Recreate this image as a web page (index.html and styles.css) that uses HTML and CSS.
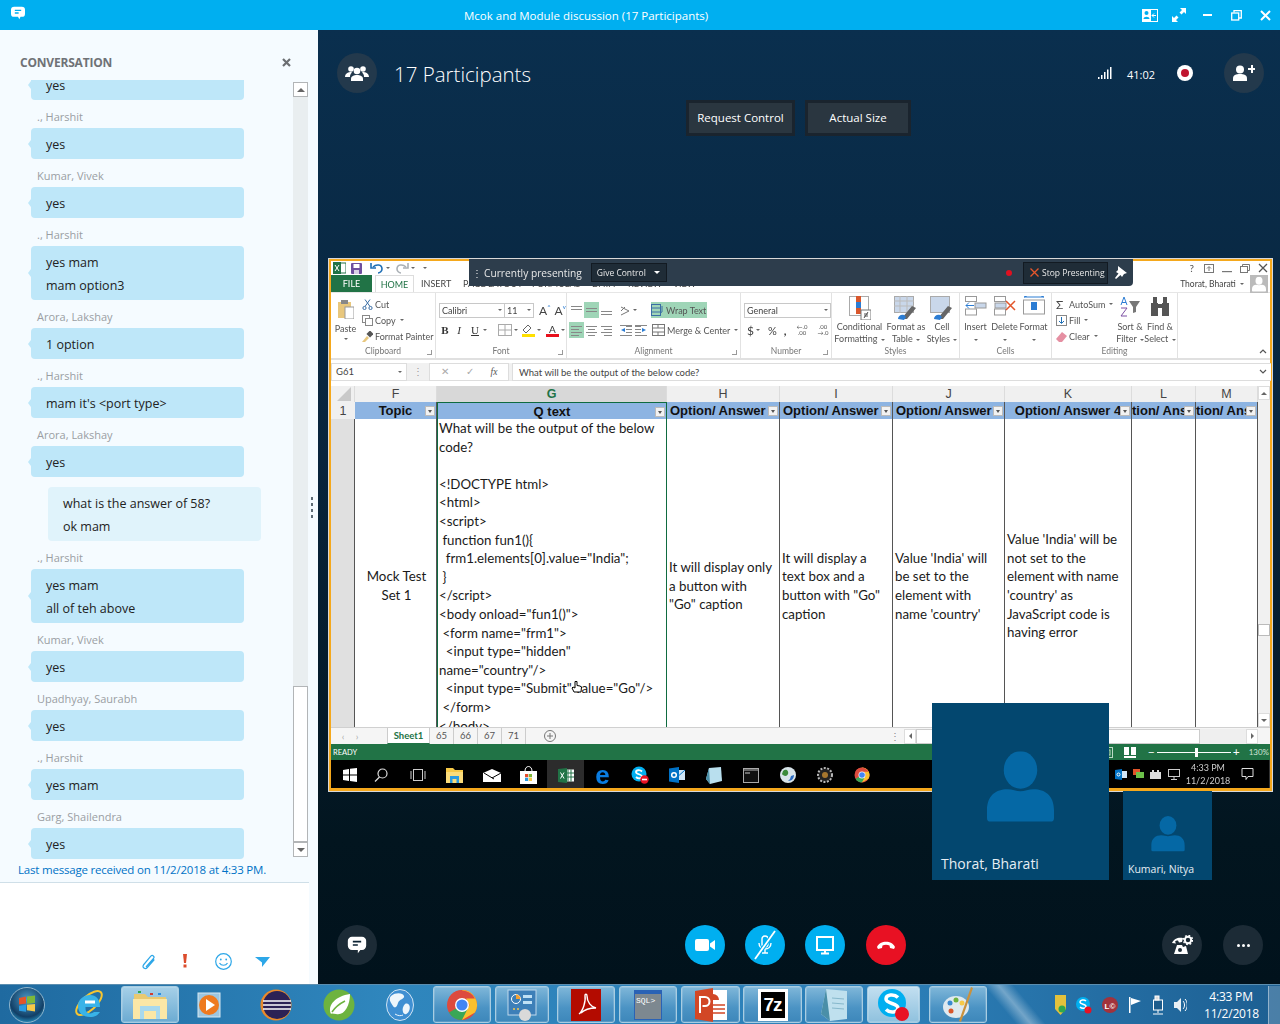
FILE: index.html
```html
<!DOCTYPE html>
<html lang="en">
<head>
<meta charset="utf-8">
<title>Mcok and Module discussion (17 Participants)</title>
<link rel="stylesheet" href="styles.css">
</head>
<body>
<svg class="defs" aria-hidden="true">
  <symbol id="chrome" viewBox="0 0 32 32">
    <circle cx="16" cy="16" r="15" fill="#dd4b3e"/>
    <path d="M16 16 3 23.500A15 15 0 0 0 16 31l7.500-13z" fill="#3aa757"/>
    <path d="M16 1a15 15 0 0 1 13 22.500L16 31l7.500-15z" fill="#fbc02d"/>
    <path d="M3 8.500 9.500 20 16 9.500h13A15 15 0 0 0 3 8.500z" fill="#dd4b3e"/>
    <circle cx="16" cy="16" r="7" fill="#fff"/><circle cx="16" cy="16" r="5.600" fill="#4285f4"/>
  </symbol>
  <symbol id="person" viewBox="0 0 100 110">
    <ellipse cx="50" cy="28" rx="25" ry="28"/>
    <path d="M0 100V88C0 66 14 57 30 57c8 0 14 3 20 3s12-3 20-3c16 0 30 9 30 31v12q0 5-5 5H5q-5 0-5-5z"/>
  </symbol>
  <symbol id="chatglyph" viewBox="0 0 24 24">
    <path d="M6 2h12a5 5 0 0 1 5 5v6a5 5 0 0 1-5 5h-2l-3 4v-4H6a5 5 0 0 1-5-5V7a5 5 0 0 1 5-5z" fill="#fff"/>
    <path d="M7 8h10M7 12h6" stroke="#0b2233" stroke-width="2"/>
  </symbol>
</svg>

<header class="titlebar">
  <svg class="title-chat" width="16" height="14" viewBox="0 0 24 22"><path d="M6 1h12a5 5 0 0 1 5 5v6a5 5 0 0 1-5 5h-2l-2 4-2-4H6a5 5 0 0 1-5-5V6a5 5 0 0 1 5-5z" fill="#fff"/><path d="M7 7h10M7 11h6" stroke="#00aff0" stroke-width="2"/></svg>
  <span class="title-text">Mcok and Module discussion (17 Participants)</span>
  <div class="win-btns">
    <span class="win-btn"><svg width="16" height="13" viewBox="0 0 16 13"><rect width="16" height="13" fill="#fff"/><rect x="9" y="1" width="6" height="11" fill="#00aff0"/><circle cx="4.500" cy="4" r="2" fill="#00aff0"/><path d="M1.500 10c0-3 6-3 6 0z" fill="#00aff0"/><path d="M14 6.500h-4M12 4.500l-2 2 2 2" stroke="#fff" fill="none"/></svg></span>
    <span class="win-btn"><svg width="14" height="14" viewBox="0 0 14 14" fill="#fff"><path d="M8 0h6v6l-2-2-2.500 2.500-2-2L10 2zM6 14H0V8l2 2 2.500-2.500 2 2L4 12z"/></svg></span>
    <span class="win-btn"><svg width="9" height="2" viewBox="0 0 9 2"><rect width="9" height="2" fill="#fff"/></svg></span>
    <span class="win-btn"><svg width="11" height="11" viewBox="0 0 11 11" fill="none" stroke="#fff" stroke-width="1.300"><rect x=".7" y="3" width="7" height="7"/><path d="M3 2.500V.7h7.300V8H8"/></svg></span>
    <span class="win-btn"><svg width="11" height="11" viewBox="0 0 11 11" stroke="#fff" stroke-width="2"><path d="M1 1l9 9M10 1l-9 9"/></svg></span>
  </div>
</header>

<main class="app">
  <aside class="sidebar">
    <div class="conv-head">
      <h2 class="conv-title">CONVERSATION</h2>
      <svg class="conv-close" width="9" height="9" viewBox="0 0 9 9" stroke="#6b6e72" stroke-width="2.200"><path d="M1 1l7 7M8 1l-7 7"/></svg>
    </div>
    <div class="conv-body">
      <div class="messages">
        <div class="msg-scroll">
          <div class="bubble">yes</div>
          <div class="sender">., Harshit</div>
          <div class="bubble">yes</div>
          <div class="sender">Kumar, Vivek</div>
          <div class="bubble">yes</div>
          <div class="sender">., Harshit</div>
          <div class="bubble">yes mam<br>mam option3</div>
          <div class="sender">Arora, Lakshay</div>
          <div class="bubble">1 option</div>
          <div class="sender">., Harshit</div>
          <div class="bubble">mam it's &lt;port type&gt;</div>
          <div class="sender">Arora, Lakshay</div>
          <div class="bubble">yes</div>
          <div class="bubble self">what is the answer of 58?<br>ok mam</div>
          <div class="sender">., Harshit</div>
          <div class="bubble">yes mam<br>all of teh above</div>
          <div class="sender">Kumar, Vivek</div>
          <div class="bubble">yes</div>
          <div class="sender">Upadhyay, Saurabh</div>
          <div class="bubble">yes</div>
          <div class="sender">., Harshit</div>
          <div class="bubble">yes mam</div>
          <div class="sender">Garg, Shailendra</div>
          <div class="bubble">yes</div>
        </div>
      </div>
      <div class="grip"><i></i><i></i><i></i><i></i></div>
      <div class="chat-scroll">
        <div class="cs-btn"><span class="tri-up"></span></div>
        <div class="cs-track"><div class="cs-thumb"></div></div>
        <div class="cs-btn"><span class="tri-down"></span></div>
      </div>
    </div>
    <p class="last-msg">Last message received on 11/2/2018 at 4:33 PM.</p>
    <div class="composer">
      <div class="composer-tools">
        <svg width="16" height="18" viewBox="0 0 16 18" fill="none" stroke="#2da7e8" stroke-width="1.200"><path d="M5 15 12.500 6.500c1.500-2 -1-4-2.700-2.300L2.800 12.500c-2.500 3 1.500 5.500 3.500 3.200l7-8.200"/></svg>
        <svg width="6" height="14" viewBox="0 0 6 14" fill="#dc4c2c"><path d="M1 0h4L4 9H2z"/><rect x="1.500" y="10.500" width="3" height="3"/></svg>
        <svg width="17" height="17" viewBox="0 0 17 17" fill="none" stroke="#2da7e8" stroke-width="1.200"><circle cx="8.500" cy="8.500" r="7.800"/><circle cx="5.800" cy="6.500" r=".9" fill="#2da7e8" stroke="none"/><circle cx="11.200" cy="6.500" r=".9" fill="#2da7e8" stroke="none"/><path d="M4.500 10c1.800 3 6.200 3 8 0"/></svg>
        <svg width="15" height="11" viewBox="0 0 15 11" fill="#2da7e8"><path d="M0 1h15L7 11V6.500z"/></svg>
      </div>
    </div>
  </aside>

  <section class="stage">
    <div class="stage-head">
      <span class="round dark"><svg width="24" height="16" viewBox="0 0 24 16" fill="#fff"><circle cx="6" cy="4" r="2.800"/><circle cx="18" cy="4" r="2.800"/><circle cx="12" cy="6" r="3.300"/><path d="M0 12c0-4 4-5 6-5l1 .5C5 9 5 11 5 12zM24 12c0-4-4-5-6-5l-1 .5c2 1.500 2 3.500 2 4.500z"/><path d="M6 16v-2c0-3 3-4 6-4s6 1 6 4v2z"/></svg></span>
      <h1 class="participants">17 Participants</h1>
      <div class="head-right">
        <svg class="signal" width="14" height="12" viewBox="0 0 14 12" fill="#fff"><rect y="10" width="1.500" height="2"/><rect x="3" y="8" width="1.500" height="4"/><rect x="6" y="5" width="1.500" height="7"/><rect x="9" y="2.500" width="1.500" height="9.500"/><rect x="12" width="1.500" height="12"/></svg>
        <span class="timer">41:02</span>
        <svg class="rec" width="16" height="16" viewBox="0 0 16 16"><circle cx="8" cy="8" r="8" fill="#fff"/><circle cx="8" cy="8" r="4" fill="#c0152f"/></svg>
        <span class="round dark"><svg width="22" height="16" viewBox="0 0 22 16" fill="#fff"><circle cx="7" cy="4.500" r="4"/><path d="M0 16v-2.500C0 10 3 9 7 9s7 1 7 4.500V16z"/><path d="M15 3h3V0h2v3h2v2h-2v3h-2V5h-3z"/></svg></span>
      </div>
    </div>
    <div class="view-btns">
      <button class="view-btn req">Request Control</button>
      <button class="view-btn act">Actual Size</button>
    </div>

    <div class="screen">
      <div class="xl">
        <div class="xl-title">
          <svg class="q" width="13" height="12" viewBox="0 0 13 12"><rect x="4" y="1" width="9" height="10" fill="#fff" stroke="#217346"/><rect y="0" width="8" height="12" fill="#217346"/><path d="M2 3l4 6M6 3L2 9" stroke="#fff"/></svg>
          <svg class="q" width="11" height="11" viewBox="0 0 11 11"><rect width="11" height="11" rx="1" fill="#6e4f9e"/><rect x="2.500" y="1" width="6" height="4" fill="#fff"/><rect x="3" y="7" width="5" height="4" fill="#d9d2e6"/></svg>
          <svg class="q undo" width="14" height="12" viewBox="0 0 14 12" fill="none" stroke="#1f6fb5" stroke-width="1.600"><path d="M3 5c3-3 9-3 9 2 0 2-2 4-4 4"/><path d="M1 1v5h5"/></svg>
          <span class="caret-sm"></span>
          <svg class="q redo" width="14" height="12" viewBox="0 0 14 12" fill="none" stroke="#aab0b5" stroke-width="1.600"><path d="M11 5C8 2 2 2 2 7c0 2 2 4 4 4"/><path d="M13 1v5H8"/></svg>
          <span class="caret-sm"></span>
          <span class="caret-sm last"></span>
          <div class="xl-winbtns">
            <span class="xw">?</span>
            <svg width="10" height="9" viewBox="0 0 10 9" fill="none" stroke="#777"><rect x=".5" y=".5" width="9" height="8"/><path d="M5 7V3M3 4.500 5 2.500l2 2"/></svg>
            <svg width="10" height="9" viewBox="0 0 10 9"><rect y="7" width="10" height="1.200" fill="#777"/></svg>
            <svg width="10" height="9" viewBox="0 0 10 9" fill="none" stroke="#777"><rect x=".5" y="2.500" width="7" height="6"/><path d="M2.500 2.500v-2h7v6h-2"/></svg>
            <svg width="10" height="10" viewBox="0 0 10 10" stroke="#555" stroke-width="1.300"><path d="M1 1l8 8M9 1L1 9"/></svg>
          </div>
        </div>
        <div class="xl-tabs">
          <span class="tab file">FILE</span>
          <span class="tab home">HOME</span>
          <span class="tab ins">INSERT</span>
          <span class="tab pl">PAGE LAYOUT</span>
          <span class="tab fm">FORMULAS</span>
          <span class="tab dt">DATA</span>
          <span class="tab rv">REVIEW</span>
          <span class="tab vw">VIEW</span>
          <span class="xl-user">Thorat, Bharati <span class="caret-sm"></span></span>
          <span class="xl-avatar"><svg width="14" height="17" viewBox="0 0 100 110" fill="#fff"><use href="#person"/></svg></span>
        </div>

        <div class="ribbon">
          <div class="rg clip">
            <div class="rg-body">
              <div class="paste">
                <svg width="17" height="20" viewBox="0 0 17 20"><rect x="1" y="3" width="13" height="16" fill="#e8c77d"/><rect x="4" y="1" width="7" height="4" fill="#888"/><rect x="8" y="8" width="9" height="12" fill="#fff" stroke="#999"/></svg>
                <span>Paste</span><span class="caret-sm"></span>
              </div>
              <div class="clip-col">
                <span class="ci"><svg width="11" height="11" viewBox="0 0 11 11" fill="none" stroke="#3a6ea5"><circle cx="2.500" cy="9" r="1.600"/><circle cx="8.500" cy="9" r="1.600"/><path d="M3 7.500 8 .5M8 7.500 3 .5"/></svg>Cut</span>
                <span class="ci"><svg width="11" height="11" viewBox="0 0 11 11" fill="#fff" stroke="#888"><rect x=".5" y=".5" width="7" height="7"/><rect x="3.500" y="3.500" width="7" height="7"/></svg>Copy <span class="caret-sm"></span></span>
                <span class="ci"><svg width="11" height="11" viewBox="0 0 11 11"><path d="M0 11 5 5l2 2-4 4z" fill="#e8c77d"/><rect x="5.500" y=".5" width="5" height="5" transform="rotate(45 8 3)" fill="#555"/></svg>Format Painter</span>
              </div>
            </div>
            <div class="rg-label">Clipboard<i class="launch"></i></div>
          </div>

          <div class="rg font">
            <div class="rg-body col">
              <div class="r1">
                <span class="sel s-font">Calibri<span class="caret-sm"></span></span><span class="sel s-size">11<span class="caret-sm"></span></span>
                <span class="aa big">A<sup>^</sup></span><span class="aa">A<sup>v</sup></span>
              </div>
              <div class="r2">
                <b class="ft">B</b><i class="ft">I</i><u class="ft">U</u><span class="caret-sm"></span>
                <svg class="sp" width="14" height="12" viewBox="0 0 14 12" fill="none" stroke="#aaa"><rect x=".5" y=".5" width="13" height="11"/><path d="M7 0v12M0 6h14"/></svg><span class="caret-sm"></span>
                <span class="colored"><svg width="13" height="10" viewBox="0 0 13 10" fill="#fff" stroke="#666"><path d="M6 1 1 6l3 3 5-5z"/></svg><i class="bar yellow"></i></span><span class="caret-sm"></span>
                <span class="colored"><span class="fa">A</span><i class="bar red"></i></span><span class="caret-sm"></span>
              </div>
            </div>
            <div class="rg-label">Font<i class="launch"></i></div>
          </div>

          <div class="rg align">
            <div class="rg-body col">
              <div class="r1">
                <span class="al"><svg width="13" height="9" viewBox="0 0 13 9" stroke="#888"><path d="M1 .5h11M1 3.500h11"/></svg></span>
                <span class="al on"><svg width="13" height="9" viewBox="0 0 13 9" stroke="#888"><path d="M1 2.500h11M1 5.500h11"/></svg></span>
                <span class="al"><svg width="13" height="9" viewBox="0 0 13 9" stroke="#888"><path d="M1 5.500h11M1 8.500h11"/></svg></span>
                <svg class="orient" width="11" height="11" viewBox="0 0 11 11" fill="none" stroke="#777"><path d="M1 2l8 4-8 4M1 6l4-4"/></svg><span class="caret-sm"></span>
                <span class="wrap"><svg width="14" height="12" viewBox="0 0 14 12" fill="none" stroke="#3a6ea5"><rect x=".5" y=".5" width="9" height="11"/><path d="M0 4h9M0 8h9M11 2v6l-2 1"/></svg>Wrap Text</span>
              </div>
              <div class="r2">
                <span class="al on"><svg width="13" height="11" viewBox="0 0 13 11" stroke="#888"><path d="M1 1.500h11M1 4.500h8M1 7.500h11M1 10.500h8"/></svg></span>
                <span class="al"><svg width="13" height="11" viewBox="0 0 13 11" stroke="#888"><path d="M1 1.500h11M3 4.500h7M1 7.500h11M3 10.500h7"/></svg></span>
                <span class="al"><svg width="13" height="11" viewBox="0 0 13 11" stroke="#888"><path d="M1 1.500h11M4 4.500h8M1 7.500h11M4 10.500h8"/></svg></span>
                <svg class="orient" width="12" height="11" viewBox="0 0 12 11" stroke="#888" fill="#2b7cd3"><path d="M6 1.500h6M6 4.500h6M6 7.500h6M0 10.500h12M0 .5h12" fill="none"/><path d="M5 3v4L1 5z" stroke="none"/></svg>
                <svg class="indent" width="12" height="11" viewBox="0 0 12 11" stroke="#888" fill="#2b7cd3"><path d="M0 1.500h6M0 4.500h6M0 7.500h6M0 10.500h12M0 .5h12" fill="none"/><path d="M7 3v4l4-2z" stroke="none"/></svg>
                <span class="merge"><svg width="13" height="12" viewBox="0 0 13 12" fill="none" stroke="#777"><rect x=".5" y=".5" width="12" height="11"/><path d="M0 4h13M0 8h13M6 0v4M6 8v4"/></svg>Merge &amp; Center <span class="caret-sm"></span></span>
              </div>
            </div>
            <div class="rg-label">Alignment<i class="launch"></i></div>
          </div>

          <div class="rg number">
            <div class="rg-body col">
              <div class="r1"><span class="sel s-num">General<span class="caret-sm"></span></span></div>
              <div class="r2 num-row"><span class="nb">$</span><span class="caret-sm"></span><span class="nb pc">%</span><span class="nb comma">,</span><span class="dec">←.0<br>.00</span><span class="dec">.00<br>→.0</span></div>
            </div>
            <div class="rg-label">Number<i class="launch"></i></div>
          </div>

          <div class="rg styles">
            <div class="rg-body">
              <div class="big-tool t-cf"><svg width="22" height="24" viewBox="0 0 22 24"><rect x=".5" y=".5" width="19" height="19" fill="#fff" stroke="#aaa"/><rect x="7" y="0" width="5" height="6" fill="#d9572c"/><rect x="7" y="6" width="5" height="6" fill="#2b7cd3"/><rect x="7" y="12" width="5" height="6" fill="#d9572c"/><rect x="12" y="14" width="10" height="10" fill="#fff" stroke="#777"/><path d="M15 18h4M15 20h4M19 16l-4 6" stroke="#555"/></svg><span>Conditional<br>Formatting <i class="caret-sm"></i></span></div>
              <div class="big-tool t-ft"><svg width="24" height="24" viewBox="0 0 24 24"><rect x=".5" y=".5" width="19" height="16" fill="#c9d7ea" stroke="#aaa"/><path d="M0 5h20M0 10h20M6 0v17M13 0v17" stroke="#bbb"/><path d="M8 22 18 10l4 2-9 11H5z" fill="#666"/><path d="M4 23c0-3 3-5 6-4l2 2-2 3z" fill="#2b7cd3"/></svg><span>Format as<br>Table <i class="caret-sm"></i></span></div>
              <div class="big-tool t-cs"><svg width="24" height="24" viewBox="0 0 24 24"><rect x=".5" y=".5" width="19" height="16" fill="#c9d7ea" stroke="#aaa"/><path d="M8 22 18 10l4 2-9 11H5z" fill="#666"/><path d="M4 23c0-3 3-5 6-4l2 2-2 3z" fill="#2b7cd3"/></svg><span>Cell<br>Styles <i class="caret-sm"></i></span></div>
            </div>
            <div class="rg-label">Styles</div>
          </div>

          <div class="rg cells">
            <div class="rg-body">
              <div class="big-tool t-c"><svg width="22" height="20" viewBox="0 0 22 20" fill="none" stroke="#999"><rect x=".5" y=".5" width="11" height="5"/><rect x=".5" y="13" width="11" height="6"/><rect x="10" y="7" width="11" height="5" fill="#c9d7ea"/><path d="M9 9.500H1M4 6.500l-3 3 3 3" stroke="#2b7cd3"/></svg><span>Insert<br><i class="caret-sm"></i></span></div>
              <div class="big-tool t-c"><svg width="22" height="20" viewBox="0 0 22 20" fill="none" stroke="#999"><rect x=".5" y=".5" width="11" height="5"/><rect x=".5" y="13" width="11" height="6"/><rect x="1" y="7" width="11" height="5" fill="#c9d7ea"/><path d="M12 5l9 9M21 5l-9 9" stroke="#e2552a" stroke-width="1.500"/></svg><span>Delete<br><i class="caret-sm"></i></span></div>
              <div class="big-tool t-c"><svg width="22" height="20" viewBox="0 0 22 20" fill="none" stroke="#999"><path d="M1 1h20M1 1l3-1M21 1l-3-1" stroke="#2b7cd3"/><rect x=".5" y="4" width="21" height="14"/><rect x="8" y="6" width="6" height="8" fill="#2b7cd3" stroke="none"/></svg><span>Format<br><i class="caret-sm"></i></span></div>
            </div>
            <div class="rg-label">Cells</div>
          </div>

          <div class="rg editing">
            <div class="rg-body">
              <div class="edit-col">
                <span class="ci"><span class="sigma">&#931;</span>AutoSum <span class="caret-sm"></span></span>
                <span class="ci"><svg width="11" height="11" viewBox="0 0 11 11" fill="#fff" stroke="#888"><rect x=".5" y=".5" width="10" height="10"/><path d="M5.500 2v6M3 6l2.500 2.500L8 6" stroke="#1f6fb5" fill="none"/></svg>Fill <span class="caret-sm"></span></span>
                <span class="ci"><svg width="11" height="11" viewBox="0 0 11 11"><path d="M0 8 6 1l5 4-5 6H3z" fill="#e58fa2"/></svg>Clear <span class="caret-sm"></span></span>
              </div>
              <div class="big-tool t-sf"><svg width="22" height="21" viewBox="0 0 22 21"><path d="M2 9 5 1l3 8M3 6.500h4" stroke="#2b7cd3" fill="none"/><path d="M2 12h6l-6 8h6" stroke="#7b4fa3" fill="none"/><path d="M10 5h11l-4 6v5l-3 1v-6z" fill="#777"/></svg><span>Sort &amp;<br>Filter <i class="caret-sm"></i></span></div>
              <div class="big-tool t-sf"><svg width="22" height="21" viewBox="0 0 22 21" fill="#555"><rect x="2" y="7" width="7" height="13"/><rect x="13" y="7" width="7" height="13"/><rect x="4" y="1" width="4" height="7"/><rect x="14" y="1" width="4" height="7"/><rect x="9" y="8" width="4" height="4"/></svg><span>Find &amp;<br>Select <i class="caret-sm"></i></span></div>
            </div>
            <div class="rg-label">Editing</div>
          </div>
          <div class="rg-end"><svg width="8" height="5" viewBox="0 0 8 5" fill="none" stroke="#555" stroke-width="1.200"><path d="M1 4l3-3 3 3"/></svg></div>
        </div>

        <div class="formula">
          <span class="namebox">G61<span class="caret-sm"></span></span>
          <span class="f-dots">&#8942;</span>
          <span class="f-btns"><span>&#10005;</span><span>&#10003;</span><em>fx</em></span>
          <span class="f-input">What will be the output of the below code?</span>
          <svg class="f-exp" width="8" height="5" viewBox="0 0 8 5" fill="none" stroke="#555" stroke-width="1.200"><path d="M1 1l3 3 3-3"/></svg>
        </div>

        <div class="sheet">
          <div class="grid-wrap">
            <div class="grid">
              <div class="ch corner"><svg width="14" height="14" viewBox="0 0 14 14"><path d="M14 0v14H0z" fill="#c9c9c9"/></svg></div>
              <div class="ch">F</div><div class="ch sel-col">G</div><div class="ch">H</div><div class="ch">I</div><div class="ch">J</div><div class="ch">K</div><div class="ch">L</div><div class="ch">M</div>

              <div class="rh">1</div>
              <div class="hd">Topic<i class="fb"></i></div>
              <div class="hd g-hd">Q text<i class="fb"></i></div>
              <div class="hd left">Option/ Answer<i class="fb"></i></div>
              <div class="hd left">Option/ Answer<i class="fb"></i></div>
              <div class="hd left">Option/ Answer<i class="fb"></i></div>
              <div class="hd clipr">Option/ Answer 4<i class="fb"></i></div>
              <div class="hd cut"><span>tion/ Ans</span><i class="fb"></i></div>
              <div class="hd cut"><span>tion/ Ans</span><i class="fb"></i></div>

              <div class="rh2"></div>
              <div class="dc ctr">Mock Test<br>Set 1</div>
              <div class="dc code">What will be the output of the below
code?

&lt;!DOCTYPE html&gt;
&lt;html&gt;
&lt;script&gt;
 function fun1(){
  frm1.elements[0].value="India";
 }
&lt;/script&gt;
&lt;body onload="fun1()"&gt;
 &lt;form name="frm1"&gt;
  &lt;input type="hidden"
name="country"/&gt;
  &lt;input type="Submit" value="Go"/&gt;
 &lt;/form&gt;
&lt;/body&gt;</div>
              <div class="dc">It will display only<br>a button with<br>"Go" caption</div>
              <div class="dc">It will display a<br>text box and a<br>button with "Go"<br>caption</div>
              <div class="dc">Value 'India' will<br>be set to the<br>element with<br>name 'country'</div>
              <div class="dc">Value 'India' will be<br>not set to the<br>element with name<br>'country' as<br>JavaScript code is<br>having error</div>
              <div class="dc"></div>
              <div class="dc"></div>
            </div>
            <svg class="cursor" width="11" height="12" viewBox="0 0 11 12" fill="#fff" stroke="#000"><path d="M4 .5h2v4l3 .5 1.500 1-.5 5H3L1 7l1-1 2 1z"/></svg>
          </div>
          <div class="v-scroll">
            <span class="vb"><span class="tri-up small"></span></span>
            <div class="v-track"><div class="v-thumb"></div></div>
            <span class="vb"><span class="tri-down small"></span></span>
          </div>
        </div>

        <div class="sheet-tabs">
          <span class="st-nav">&#8249;</span><span class="st-nav">&#8250;</span>
          <span class="st active">Sheet1</span>
          <span class="st">65</span><span class="st">66</span><span class="st">67</span><span class="st">71</span>
          <svg class="st-add" width="12" height="12" viewBox="0 0 12 12" fill="none" stroke="#777"><circle cx="6" cy="6" r="5.500"/><path d="M6 3v6M3 6h6"/></svg>
          <span class="st-dots">&#8942;</span>
          <div class="h-scroll">
            <span class="hb"><span class="tri-left"></span></span>
            <div class="h-track"><div class="h-thumb"></div></div>
            <span class="hb"><span class="tri-right"></span></span>
          </div>
        </div>

        <div class="status">
          <span>READY</span>
          <div class="status-right">
            <svg width="12" height="11" viewBox="0 0 12 11" fill="none" stroke="#bcd9c6"><rect x=".5" y=".5" width="11" height="10"/><rect x="3" y="3" width="6" height="5"/></svg>
            <svg class="st-v2" width="12" height="11" viewBox="0 0 12 11" fill="#fff"><path d="M0 0h5v8H0zM7 0h5v8H7zM0 9h12v2H0z"/></svg>
            <span class="zoom-minus">&#8722;</span>
            <span class="zoom-slider"><i></i></span>
            <span class="zoom-plus">+</span>
            <span class="zoom-val">130%</span>
          </div>
        </div>

        <div class="w10">
          <span class="w10i first"><svg width="14" height="14" viewBox="0 0 14 14" fill="#fff"><path d="M0 2l6-1v5.500H0zM7 .8 14 0v6.500H7zM0 7.500h6V13l-6-1zM7 7.500h7V14l-7-1z"/></svg></span>
          <span class="w10i"><svg width="14" height="14" viewBox="0 0 14 14" fill="none" stroke="#ddd" stroke-width="1.200"><circle cx="8.500" cy="5.500" r="4.500"/><path d="M5.500 9 1 13.500"/></svg></span>
          <span class="w10i"><svg width="16" height="12" viewBox="0 0 16 12" fill="none" stroke="#ccc"><rect x="3.500" y=".5" width="9" height="11"/><path d="M1 2v8M15 2v8"/></svg></span>
          <span class="w10i"><svg width="17" height="15" viewBox="0 0 17 15"><path d="M0 0h7l2 2h8v4H0z" fill="#f7c948"/><rect y="4" width="17" height="11" fill="#fbdc7a"/><rect x="4" y="8" width="9" height="7" fill="#2b9be0"/><rect x="6.500" y="11" width="4" height="4" fill="#fbdc7a"/></svg></span>
          <span class="w10i"><svg width="18" height="13" viewBox="0 0 18 13"><path d="M0 4 9 0l9 4v9H0z" fill="#fff"/><path d="M1 4l10 6" stroke="#000"/><path d="M18 4 9 9" stroke="#000"/></svg></span>
          <span class="w10i"><svg width="17" height="18" viewBox="0 0 17 18"><path d="M5 5c0-6 7-6 7 0" fill="none" stroke="#fff"/><rect y="5" width="17" height="13" fill="#fff"/><rect x="5" y="8" width="3.200" height="3.200" fill="#e74c2a"/><rect x="8.800" y="8" width="3.200" height="3.200" fill="#7db83a"/><rect x="5" y="11.800" width="3.200" height="3.200" fill="#2b9be0"/><rect x="8.800" y="11.800" width="3.200" height="3.200" fill="#f7c948"/></svg></span>
          <span class="w10i active"><svg width="16" height="15" viewBox="0 0 16 15"><rect x="5" y="1.500" width="11" height="12" fill="#fff"/><path d="M10 1.500v12M13 1.500v12M5 5h11M5 9h11" stroke="#217346"/><path d="M0 1l9-1v15l-9-1z" fill="#217346"/><path d="M2.500 4.500l3.500 6M6 4.500l-3.500 6" stroke="#fff"/></svg></span>
          <span class="w10i"><span class="edge">e</span></span>
          <span class="w10i"><svg width="18" height="18" viewBox="0 0 18 18"><circle cx="8" cy="8" r="7.500" fill="#00aff0"/><path d="M11 5.500C9 3.500 5 4 5 6c0 2.500 6 2 6 4.500 0 2-4 2.500-6 .5" fill="none" stroke="#fff" stroke-width="1.800"/><circle cx="13.500" cy="13.500" r="4.200" fill="#e81123"/><rect x="11" y="12.700" width="5" height="1.600" fill="#fff"/></svg></span>
          <span class="w10i"><svg width="16" height="16" viewBox="0 0 16 16"><rect x="5" y="3" width="11" height="10" fill="#cfe6f8"/><path d="M5 3l5.500 5L16 3" fill="none" stroke="#0072c6"/><path d="M0 1.500 10 0v16L0 14.500z" fill="#0072c6"/><circle cx="5" cy="8" r="2.300" fill="none" stroke="#fff" stroke-width="1.500"/></svg></span>
          <span class="w10i"><svg width="16" height="17" viewBox="0 0 16 17"><path d="M3 1 15 0l1 14L4 17 0 12z" fill="#b9dfee"/><path d="M3 1l1 16L0 12z" fill="#4a8fa8"/></svg></span>
          <span class="w10i"><svg width="16" height="15" viewBox="0 0 16 15"><rect x=".5" y=".5" width="15" height="14" fill="#111" stroke="#aaa"/><rect x="1" y="1" width="14" height="2" fill="#666"/><path d="M2 5h5" stroke="#ccc"/></svg></span>
          <span class="w10i"><svg width="16" height="16" viewBox="0 0 16 16"><circle cx="8" cy="8" r="8" fill="#d8e4ea"/><path d="M3 4c3-3 6 0 5 3S3 9 2 7z" fill="#3a8a3a"/><path d="M8 14c4 0 6-3 6-6l-3 1-1 3z" fill="#2b6cc4"/></svg></span>
          <span class="w10i"><svg width="16" height="16" viewBox="0 0 16 16"><circle cx="8" cy="8" r="7" fill="#222" stroke="#bbb" stroke-width="2" stroke-dasharray="2 1.500"/><circle cx="8" cy="8" r="3" fill="#a5762e"/></svg></span>
          <span class="w10i"><svg width="16" height="16"><use href="#chrome"/></svg></span>
          <div class="w10-tray">
            <svg width="12" height="11" viewBox="0 0 12 11"><rect x="4" y="2" width="8" height="7" fill="#cfe6f8"/><path d="M0 1l7-1v11l-7-1z" fill="#0072c6"/><circle cx="3.500" cy="5.500" r="1.500" fill="none" stroke="#fff"/></svg>
            <svg width="11" height="11" viewBox="0 0 11 11"><rect width="7" height="6" fill="#e2552a"/><rect x="3" y="3" width="8" height="6" fill="#6cc04a"/></svg>
            <svg width="12" height="9" viewBox="0 0 12 9"><rect y="2" width="11" height="7" fill="#ddd"/><rect x="2" width="2" height="2" fill="#ddd"/><rect x="7" width="2" height="2" fill="#ddd"/></svg>
            <svg width="12" height="11" viewBox="0 0 12 11" fill="none" stroke="#ccc"><rect x=".5" y=".5" width="11" height="7"/><path d="M6 8v2M3 10.500h6"/></svg>
            <span class="w10-clock">4:33 PM<br>11/2/2018</span>
            <svg class="w10-note" width="13" height="12" viewBox="0 0 13 12" fill="none" stroke="#ddd"><path d="M1 .5h11v8H7l-2 3v-3H1z"/></svg>
          </div>
        </div>
      </div>

      <div class="present-bar">
        <span class="pb-dots">&#8942;</span>
        <span class="pb-text">Currently presenting</span>
        <span class="give">Give Control<span class="caret-w"></span></span>
        <span class="pb-rec"></span>
        <span class="stop"><svg width="9" height="9" viewBox="0 0 9 9" stroke="#e8572c" stroke-width="1.300"><path d="M.5.5l8 8M8.500.5l-8 8"/></svg>Stop Presenting</span>
        <svg class="pin" width="14" height="14" viewBox="0 0 14 14" fill="#fff"><path d="M5 0l9 7-3 1-2 3-1.500-2L3 13l-1-1 3.500-4.500L3 6l2-2z"/></svg>
      </div>
    </div>

    <div class="controls">
      <span class="round dark"><svg width="20" height="20"><use href="#chatglyph"/></svg></span>
      <div class="ctrl-center">
        <span class="round blue"><svg width="20" height="12" viewBox="0 0 20 12" fill="#fff"><rect width="14" height="12" rx="2"/><path d="M15 4.500 20 1v10l-5-3.500z"/></svg></span>
        <span class="round blue"><svg width="26" height="30" viewBox="0 0 26 30" fill="none" stroke="#fff" stroke-width="1.400"><rect x="10" y="6" width="6" height="11" rx="3"/><path d="M7 13c0 8 12 8 12 0M13 19v4M10 23h6"/><path d="M23 1 3 29" stroke="#00aff0" stroke-width="4"/><path d="M23 1 3 29" stroke-width="1.800"/></svg></span>
        <span class="round blue"><svg width="20" height="20" viewBox="0 0 20 20" fill="none" stroke="#fff" stroke-width="2"><rect x="2" y="2" width="16" height="13"/><path d="M10 15v3M6 18.500h8"/></svg></span>
        <span class="round red"><svg width="18" height="8" viewBox="0 0 18 8" fill="#fff"><path d="M0 6c3-7 15-7 18 0l-1 2-4-1-.5-2.500c-2-1-5-1-7 0L5 7 1 8z"/></svg></span>
      </div>
      <div class="ctrl-right">
        <span class="round dark"><svg width="22" height="20" viewBox="0 0 22 20" fill="#fff"><path d="M1 8c2-5 7-6 11-5l-1 4-3 .5-1-2c-1.500 0-2.500.5-3 1l1 2z"/><path d="M6 10h5l1 2 3-1 2 8H3z"/><circle cx="9" cy="15" r="2" fill="#1c2b36"/><circle cx="17" cy="5" r="3.200" fill="none" stroke="#fff" stroke-width="2"/><circle cx="17" cy="5" r="4.600" fill="none" stroke="#fff" stroke-width="1.400" stroke-dasharray="1.800 1.800"/></svg></span>
        <span class="round dark"><svg width="13" height="3" viewBox="0 0 13 3" fill="#fff"><circle cx="1.500" cy="1.500" r="1.500"/><circle cx="6.500" cy="1.500" r="1.500"/><circle cx="11.500" cy="1.500" r="1.500"/></svg></span>
      </div>
    </div>

    <div class="tile tile-main">
      <svg class="tile-person" width="67" height="74" viewBox="0 0 100 110"><use href="#person"/></svg>
      <span class="tile-name">Thorat, Bharati</span>
    </div>
    <div class="tile tile-small">
      <svg class="tile-person" width="34" height="37" viewBox="0 0 100 110"><use href="#person"/></svg>
      <span class="tile-name">Kumari, Nitya</span>
    </div>
  </section>
</main>

<footer class="taskbar">
  <span class="orb"><svg width="36" height="36" viewBox="0 0 36 36"><defs><radialGradient id="orbg" cx=".5" cy=".35" r=".7"><stop offset="0" stop-color="#4c9bc8"/><stop offset=".7" stop-color="#123f66"/><stop offset="1" stop-color="#2a9fd0"/></radialGradient></defs><circle cx="18" cy="18" r="17.500" fill="url(#orbg)" stroke="#8fb5cc"/><path d="M10 11l7-1.500v7l-7 1z" fill="#e2552a"/><path d="M18 9.500l8-1V16l-8 .8z" fill="#7db83a"/><path d="M10 18.800l7-1v7l-7-1z" fill="#2b9be0"/><path d="M18 17.700l8-.8v7.600l-8-1.300z" fill="#f7c948"/></svg></span>
  <span class="tb plain ie"><svg width="34" height="34" viewBox="0 0 34 34"><ellipse cx="17" cy="15" rx="16" ry="7" transform="rotate(-42 17 15)" fill="none" stroke="#f6c531" stroke-width="2"/><path d="M8 19h20c0-8-4-12-10-12S6 11 6 18c0 7 5 11 12 11 5 0 8-2 10-5h-6c-2 2-7 2-8-1-.4-1-.5-2-.5-4z" fill="#39b3e8"/><rect x="13" y="12.500" width="10" height="3" fill="#fff"/></svg></span>
  <span class="tb btn expl"><svg width="36" height="32" viewBox="0 0 36 32"><path d="M2 5h11l3 3h18v6H2z" fill="#e9c970"/><rect x="6" y="2" width="3" height="2" fill="#2fa84f"/><rect x="18" y="4" width="3" height="2" fill="#d13c2f"/><rect x="26" y="4" width="3" height="2" fill="#2b8fe0"/><path d="M1 10h34v20H1z" fill="#fbe7a6"/><path d="M8 17h20v13h-4v-8H12v8H8z" fill="#a8d9ee"/></svg></span>
  <span class="tb plain mp"><svg width="30" height="30" viewBox="0 0 30 30"><rect x="3" y="3" width="22" height="24" fill="#9cc6e0" stroke="#d5e8f2"/><circle cx="14" cy="15" r="10" fill="#ee7a1f"/><path d="M11 9l9 6-9 6z" fill="#fff"/></svg></span>
  <span class="tb plain ecl"><svg width="32" height="32" viewBox="0 0 32 32"><circle cx="16" cy="16" r="15.500" fill="#e98a2b"/><circle cx="17" cy="16" r="14" fill="#2c2255"/><path d="M3 12h28M3 16h28M3 20h28" stroke="#fff" stroke-width="1.600"/></svg></span>
  <span class="tb plain spr"><svg width="32" height="32" viewBox="0 0 32 32"><circle cx="16" cy="16" r="15.500" fill="#6db33f"/><path d="M8 25C4 16 13 7 27 5c0 12-6 22-14 20-2 0-4-1-5 0z" fill="#fff"/><path d="M9 23c4-6 9-9 13-11" stroke="#6db33f" stroke-width="1.500" fill="none"/></svg></span>
  <span class="tb plain glb"><svg width="28" height="32" viewBox="0 0 28 32"><ellipse cx="14" cy="16" rx="13.500" ry="15.500" fill="#3f8fd2" stroke="#cfe3f2"/><path d="M5 7c5-4 12-3 13 0s-5 3-6 7-3 6-5 3-5-7-2-10z" fill="#eef6fb"/><path d="M19 15c4-2 6 3 4 7s-5 4-6 1 0-6 2-8z" fill="#eef6fb"/><path d="M9 25c3 2 6 2 8 1" stroke="#eef6fb" fill="none"/></svg></span>
  <span class="tb btn b-chrome"><svg width="32" height="32"><use href="#chrome"/></svg></span>
  <span class="tb btn b-ctrl"><svg width="34" height="34" viewBox="0 0 34 34"><rect x="3" y="2" width="28" height="25" fill="#3d7fb8" stroke="#bfd9ec"/><circle cx="11" cy="11" r="4.500" fill="none" stroke="#fff"/><path d="M11 6.500A4.500 4.500 0 0 1 15.500 11H11z" fill="#f4a033"/><rect x="18" y="7" width="9" height="3" fill="#bfe0f5"/><rect x="18" y="13" width="9" height="3" fill="#bfe0f5"/><circle cx="9" cy="21" r="1" fill="#f7c948"/><circle cx="13" cy="21" r="1" fill="#f7c948"/><circle cx="20" cy="27" r="6" fill="#d9d9d9"/></svg></span>
  <span class="tb btn b-acro"><svg width="30" height="32" viewBox="0 0 30 32"><rect width="30" height="32" fill="#b30b00"/><path d="M8 25c4-3 7-13 6-18 0-3 2-2 2 0 0 6 4 11 9 12-6 0-12 2-15 5" fill="none" stroke="#fff" stroke-width="1.400"/></svg></span>
  <span class="tb btn b-sql"><svg width="28" height="30" viewBox="0 0 28 30"><rect width="28" height="30" fill="#2a62b5"/><rect x="1" y="4" width="26" height="25" fill="#7d8890"/><text class="sqltext" x="2" y="13">SQL&gt;</text></svg></span>
  <span class="tb btn b-ppt"><svg width="32" height="34" viewBox="0 0 32 34"><rect x="10" y="2" width="22" height="30" fill="#fff"/><path d="M18 6a6 6 0 0 1 6 6h-6z" fill="#d24726"/><path d="M17 17h13M17 21h13M17 25h13" stroke="#d24726" stroke-width="1.600"/><path d="M0 3 18 0v34L0 31z" fill="#d24726"/><path d="M5 25V9h5a4 4 0 0 1 0 9H7.500" fill="none" stroke="#fff" stroke-width="2"/></svg></span>
  <span class="tb btn b-7z"><span class="sevenz">7z</span></span>
  <span class="tb btn b-note"><svg width="28" height="34" viewBox="0 0 28 34"><path d="M6 1 27 3v28L10 33 1 26z" fill="#bfe0ee"/><path d="M6 1l4 32-9-7z" fill="#4a8fa8"/><path d="M12 10l12 1M12 15l12 1M12 20l12 1" stroke="#86b8cc"/></svg></span>
  <span class="tb btn b-skype"><svg width="32" height="34" viewBox="0 0 32 34"><circle cx="14" cy="15" r="14" fill="#00aff0"/><path d="M20 9.500C16 5.500 8 6.500 8 11c0 5 12 4 12 9 0 4.500-8 5.500-12 1.500" fill="none" stroke="#fff" stroke-width="3.500"/><circle cx="24" cy="26" r="7" fill="#e81123"/></svg></span>
  <span class="tb btn b-paint"><svg width="30" height="36" viewBox="0 0 30 36"><ellipse cx="13" cy="20" rx="13" ry="11" fill="#dfe9ef"/><circle cx="7" cy="16" r="2.500" fill="#3a8ad0"/><circle cx="13" cy="13" r="2.500" fill="#6db33f"/><circle cx="19" cy="16" r="2.500" fill="#f7c948"/><circle cx="8" cy="24" r="2.500" fill="#d9572c"/><path d="M28 0l2 1-12 34-2-1z" fill="#c9913d"/></svg></span>
  <div class="tray">
    <svg width="11" height="20" viewBox="0 0 11 20"><path d="M0 0h11v14l-5.500 6L0 14z" fill="#e3c23d"/><circle cx="7" cy="14" r="3.500" fill="#2fa84f"/></svg>
    <svg width="16" height="18" viewBox="0 0 16 18"><circle cx="7" cy="8" r="7" fill="#00aff0"/><path d="M10 5C8 3 4 4 4 6c0 2.500 6 2 6 4.500 0 2-4 2.500-6 .5" fill="none" stroke="#fff" stroke-width="1.500"/><circle cx="12" cy="14" r="3.500" fill="#e81123"/></svg>
    <svg width="16" height="18" viewBox="0 0 16 18"><circle cx="8" cy="9" r="8" fill="#a2323c"/><text class="lbc" x="2.500" y="13">L©</text></svg>
    <svg width="13" height="16" viewBox="0 0 13 16" fill="#fff"><path d="M1 0h1.500v16H1z"/><path d="M3 1l10 3-10 4z"/></svg>
    <svg width="13" height="20" viewBox="0 0 13 20" fill="none" stroke="#fff"><rect x="2.500" y="5" width="9" height="10" fill="#1d5c8c"/><rect x="4" y="1" width="4" height="4" fill="#ddd"/><path d="M7 15v3M2 19h10"/></svg>
    <svg width="13" height="16" viewBox="0 0 13 16" fill="#fff"><path d="M0 5h3l4-4v14l-4-4H0z" opacity=".9"/><path d="M9 4c2 2 2 6 0 8M11 2c3 3 3 9 0 12" fill="none" stroke="#fff"/></svg>
    <span class="clock">4:33 PM<br>11/2/2018</span>
    <span class="show-desk"></span>
  </div>
</footer>
</body>
</html>
```
FILE: styles.css
```css
* { box-sizing: border-box; }
html, body { margin: 0; height: 100%; }
body {
  width: 1280px; height: 1024px; overflow: hidden; display: flex; flex-direction: column;
  font-family: "Open Sans", "Liberation Sans", sans-serif; color: #111;
}
.defs { position: absolute; width: 0; height: 0; }
h1, h2, p { margin: 0; font-weight: normal; }
svg { flex: none; display: block; }

/* title */
.titlebar { height: 30px; flex: none; background: #00aff0; display: flex; align-items: center; padding-left: 10px; color: #fff; font-size: 11.500px; }
.title-chat { margin-top: -4px; }
.title-text { margin-left: 438px; }
.win-btns { margin-left: auto; display: flex; }
.win-btn { width: 29px; height: 30px; display: flex; align-items: center; justify-content: center; }

.app { flex: none; height: 954px; display: flex; }

/* sidebar */
.sidebar { width: 318px; flex: none; display: flex; flex-direction: column; background: #f5fbff; }
.conv-head { height: 50px; flex: none; display: flex; align-items: flex-end; padding: 0 27px 9px 20px; justify-content: space-between; }
.conv-title { font-size: 12px; font-weight: 700; line-height: 17px; color: #6f7276; letter-spacing: -.2px; }
.conv-close { margin-bottom: 4px; }
.conv-body { height: 781px; flex: none; display: flex; position: relative; }
.messages { width: 293px; flex: none; overflow: hidden; }
.msg-scroll { margin-top: -11px; padding-left: 31px; }
.bubble { position: relative; width: 213px; padding: 5px 15px 3px; line-height: 23px; font-size: 12.500px; background: #bee7f9; border-radius: 4px; color: #222; }
.bubble::before { content: ""; position: absolute; left: -3px; top: 50%; margin-top: -4px; border: 4px solid transparent; border-left: 0; border-right: 3px solid #bee7f9; }
.bubble.self { margin: 10px 0 0 17px; background: #e0f3fb; }
.bubble.self::before { display: none; }
.sender { height: 28px; padding: 9px 0 3px 6px; line-height: 16px; font-size: 11px; color: #9a9ea3; }
.grip { position: absolute; left: 311px; top: 417px; display: flex; flex-direction: column; gap: 3px; }
.grip i { width: 2px; height: 3px; background: #5d6b75; }
.chat-scroll { width: 15px; height: 775px; margin-top: 2px; display: flex; flex-direction: column; }
.cs-btn { width: 15px; height: 15px; flex: none; background: #fff; border: 1px solid #b2b5b7; display: flex; align-items: center; justify-content: center; }
.cs-track { flex: 1; background: #e9eef0; display: flex; flex-direction: column; justify-content: flex-end; }
.cs-thumb { height: 156px; background: #fff; border: 1px solid #b2b5b7; }
.tri-up, .tri-down, .tri-left, .tri-right { width: 0; height: 0; border: 4px solid transparent; display: block; }
.tri-up { border-top: 0; border-bottom: 4px solid #666; }
.tri-down { border-bottom: 0; border-top: 4px solid #666; }
.tri-left { border-width: 3px 3px 3px 0; border-color: transparent #666 transparent transparent; }
.tri-right { border-width: 3px 0 3px 3px; border-color: transparent transparent transparent #666; }
.tri-up.small, .tri-down.small { border-width: 3px; }
.tri-up.small { border-top-width: 0; } .tri-down.small { border-bottom-width: 0; }
.last-msg { height: 22px; flex: none; padding: 0 0 0 18px; line-height: 18px; font-size: 11.500px; color: #0072c6; border-bottom: 1px solid #cfdfe8; width: 309px; letter-spacing: -.2px; }
.composer { flex: 1; background: #fff; width: 309px; display: flex; align-items: flex-end; position: relative; }
.composer-tools { display: flex; align-items: center; padding: 0 0 14px 141px; }
.composer-tools svg:nth-child(2) { margin-left: 25px; }
.composer-tools svg:nth-child(3) { margin-left: 27px; }
.composer-tools svg:nth-child(4) { margin-left: 23px; }

/* stage */
.stage { flex: 1; position: relative; display: flex; flex-direction: column; background: linear-gradient(#0a2f4e 0, #08243c 45%, #02151f 85%, #01121c 100%); overflow: hidden; }
.stage-head { margin-top: 23px; height: 40px; flex: none; display: flex; align-items: center; padding: 0 16px 0 19px; color: #fff; }
.round { width: 40px; height: 40px; border-radius: 50%; flex: none; display: flex; align-items: center; justify-content: center; }
.round.dark { background: #23394c; }
.controls .round.dark { background: #1c2b36; }
.round.blue { background: #00aff0; }
.round.red { background: #e81123; }
.participants { margin: 2px 0 0 17px; font-size: 20.500px; font-weight: 300; color: #fff; }
.head-right { margin-left: auto; display: flex; align-items: center; }
.signal { margin-right: 15px; }
.timer { font-size: 11px; width: 32px; margin: 2px 18px 0 0; }
.rec { margin-right: 31px; }
.view-btns { margin: 7px 0 0 368px; display: flex; gap: 10px; flex: none; }
.view-btn { height: 36px; padding: 0 0 2px; background: #2a3640; border: 3px solid #1a242e; color: #fff; font: 11.500px "Open Sans", sans-serif; }
.view-btn.req { width: 109px; } .view-btn.act { width: 106px; }

/* shared screen */
.screen { position: relative; flex: none; margin: 123px 0 0 11px; width: 943px; height: 532px; border: 2px solid #f5a81c; border-bottom-width: 3px; background: #fff; box-shadow: 0 0 0 1px #d8d8d8; }
.xl { height: 100%; display: flex; flex-direction: column; font-family: Lato, "Open Sans", sans-serif; font-size: 9px; color: #555; filter: blur(.35px); }
.caret-sm { display: inline-block; width: 0; height: 0; border: 2px solid transparent; border-bottom: 0; border-top: 2px solid #666; vertical-align: middle; margin-left: 2px; flex: none; }
.xl-title { height: 14px; flex: none; display: flex; align-items: center; padding-left: 2px; }
.xl-title .q { margin-right: 5px; }
.undo { margin-left: 3px; } .redo { margin-left: 5px; }
.xl-title .undo, .xl-title .redo { margin-right: 0; }
.caret-sm.last { margin-left: 8px; }
.xl-winbtns { margin-left: auto; display: flex; align-items: center; gap: 8px; padding-right: 2px; }
.xw { font-size: 10px; margin-right: 2px; }
.xl-tabs { height: 17px; flex: none; display: flex; align-items: center; font-size: 9px; position: relative; }
.tab { display: block; height: 17px; line-height: 17px; color: #444; flex: none; white-space: nowrap; }
.tab.file { width: 41px; background: #217346; color: #fff; text-align: center; }
.tab.home { width: 39px; margin-left: 3px; color: #217346; background: #fff; border: 1px solid #ddd; border-bottom: 0; text-align: center; }
.tab.ins { margin-left: 7px; width: 30px; }
.tab.pl { margin-left: 12px; width: 56px; } .tab.fm { margin-left: 13px; width: 46px; } .tab.dt { margin-left: 14px; width: 22px; } .tab.rv { margin-left: 14px; width: 30px; } .tab.vw { margin-left: 15px; width: 20px; }
.xl-user { margin-left: auto; font-size: 8.500px; color: #444; white-space: nowrap; }
.xl-avatar { width: 18px; height: 18px; margin: 0 2px 0 6px; background: #bbb; display: flex; align-items: flex-end; justify-content: center; overflow: hidden; }

.ribbon { height: 68px; flex: none; display: flex; border-top: 1px solid #e6e6e6; border-bottom: 2px solid #e0e0e0; font-size: 9px; }
.rg { flex: none; display: flex; flex-direction: column; border-right: 1px solid #e2e2e2; }
.rg-body { height: 52px; flex: none; display: flex; overflow: hidden; }
.rg-body.col { flex-direction: column; padding-top: 9px; gap: 4px; }
.rg-label { height: 13px; line-height: 13px; text-align: center; font-size: 8.500px; color: #777; position: relative; }
.launch { position: absolute; right: 3px; bottom: 3px; width: 5px; height: 5px; border-left: 1px solid #999; border-bottom: 1px solid #999; transform: scaleX(-1); }
.rg.clip { width: 105px; } .rg.font { width: 131px; } .rg.align { width: 174px; } .rg.number { width: 91px; } .rg.styles { width: 128px; } .rg.cells { width: 92px; } .rg.editing { width: 126px; }
.rg-end { flex: 1; display: flex; align-items: flex-end; justify-content: flex-end; padding: 0 3px 4px 0; }
.paste { width: 29px; display: flex; flex-direction: column; align-items: center; padding-top: 6px; gap: 1px; }
.paste .caret-sm { margin: 3px 0 0; }
.paste span:first-of-type { margin-top: 3px; }
.clip-col, .edit-col { display: flex; flex-direction: column; gap: 4px; padding: 5px 0 0 2px; white-space: nowrap; }
.ci { display: flex; align-items: center; gap: 2px; height: 12px; color: #555; }
.r1, .r2 { display: flex; align-items: center; height: 16px; padding-left: 3px; white-space: nowrap; flex: none; }
.sel { height: 15px; display: flex; align-items: center; justify-content: space-between; border: 1px solid #c8c8c8; padding: 0 2px; background: #fff; color: #444; }
.s-font { width: 66px; } .s-size { width: 29px; border-left: 0; }
.aa { font-size: 12px; margin-left: 4px; color: #444; } .aa sup { font-size: 6px; color: #2b7cd3; vertical-align: top; line-height: 8px; }
.aa.big { margin-left: 5px; }
.ft { width: 12px; text-align: center; font-size: 11px; color: #333; font-family: "Liberation Serif", serif; }
i.ft { margin-left: 2px; } u.ft { margin-left: 4px; }
.sp { margin-left: 11px; }
.colored { margin-left: 4px; display: flex; flex-direction: column; align-items: center; width: 13px; }
.colored + .caret-sm + .colored { margin-left: 5px; }
.bar { display: block; width: 13px; height: 3px; }
.bar.yellow { background: #ffe000; } .bar.red { background: #e8101c; }
.fa { font-size: 10px; line-height: 10px; color: #333; }
.align .r1, .align .r2 { padding-left: 2px; }
.al { width: 15px; height: 16px; display: flex; align-items: center; justify-content: center; }
.al.on { background: #9fd5b7; }
.orient { margin-left: 6px; }
.indent { margin-left: 3px; }
.wrap { margin-left: 14px; display: flex; align-items: center; gap: 1px; width: 56px; height: 16px; background: #9fd5b7; color: #555; }
.merge { margin-left: 5px; display: flex; align-items: center; gap: 2px; }
.s-num { margin-left: 0; width: 87px; }
.num-row { padding-left: 6px; }
.nb { font-size: 12px; color: #444; } .pc { margin-left: 8px; font-size: 11px; } .comma { margin-left: 7px; font-weight: 700; }
.dec { font-size: 6px; line-height: 6px; margin-left: 10px; color: #555; text-align: center; }
.big-tool { display: flex; flex-direction: column; align-items: center; text-align: center; padding-top: 3px; line-height: 12px; white-space: nowrap; color: #555; gap: 1px; }
.big-tool .caret-sm { margin-left: 1px; }
.t-cf { width: 55px; } .t-ft { width: 38px; } .t-cs { width: 34px; }
.t-c { width: 29px; padding-top: 3px; gap: 5px; } .cells .t-c:first-child { margin-left: 1px; }
.t-sf { width: 30px; gap: 4px; } .edit-col { width: 63px; padding-left: 4px; }
.sigma { font-size: 12px; color: #444; width: 11px; }

.formula { height: 18px; margin-top: 3px; flex: none; display: flex; align-items: center; font-size: 9.500px; color: #444; background: #f1f1f1; border-bottom: 1px solid #e8e8e8; }
.namebox { width: 76px; height: 18px; background: #fff; border: 1px solid #ddd; display: flex; align-items: center; justify-content: space-between; padding: 0 4px; }
.f-dots { width: 22px; text-align: center; color: #999; }
.f-btns { width: 80px; height: 18px; background: #fff; border: 1px solid #ddd; display: flex; align-items: center; justify-content: space-around; color: #aaa; padding: 0 2px; }
.f-btns em { font-family: "Liberation Serif", serif; color: #555; }
.f-input { flex: 1; height: 18px; line-height: 17px; margin-left: 3px; padding-left: 6px; background: #fff; border: 1px solid #ddd; border-right: 0; }
.f-exp { margin: 0 3px 0 -12px; }

.sheet { margin-top: 5px; height: 341px; flex: none; display: flex; background: #fff; }
.grid-wrap { width: 927px; flex: none; overflow: hidden; position: relative; }
.grid { display: grid; grid-template-columns: 24px 82px 230px 113px 113px 112px 127px 64px 62px; grid-template-rows: 16px 17px 334px; }
.ch { background: #f0f0f0; font-family: "Liberation Sans", sans-serif; font-size: 12.500px; line-height: 16px; text-align: center; color: #444; border-right: 1px solid #dcdcdc; }
.ch.corner { display: flex; justify-content: flex-end; align-items: flex-end; padding: 0 3px 1px 0; }
.ch.sel-col { background: #d8d8d8; color: #217346; font-weight: 700; }
.rh { background: #f0f0f0; text-align: center; font: 12.500px/18px "Liberation Sans", sans-serif; color: #444; }
.rh2 { background: #e0e0e0; border-right: 1px solid #555; }
.hd { position: relative; background: #8db4e2; font: 700 13px/18px "Liberation Sans", sans-serif; text-align: center; color: #111; border-right: 1px solid #555; white-space: nowrap; overflow: hidden; }
.hd.left { text-align: left; padding-left: 3px; }
.hd.cut { text-align: left; overflow: hidden; }
.g-hd { border: 1px solid #0f6b40; border-width: 1px 1px 0 1px; line-height: 17px; }
.fb { position: absolute; right: 1px; top: 4px; width: 10px; height: 10px; background: #f2f2f2; border: 1px solid #bbb; }
.fb::after { content: ""; position: absolute; left: 2px; top: 3px; border: 2px solid transparent; border-bottom: 0; border-top: 3px solid #555; }
.dc { display: flex; flex-direction: column; justify-content: center; padding-left: 2px; font-family: Lato, "Open Sans", sans-serif; font-size: 13.300px; line-height: 18.600px; color: #1a1a1a; border-right: 1px solid #555; }
.dc.ctr { text-align: center; }
.dc.code { display: block; white-space: pre; border-left: 1px solid #0f6b40; border-right: 1px solid #0f6b40; padding-left: 1px; }
.cursor { position: absolute; left: 240px; top: 295px; }
.v-scroll { width: 12px; height: 341px; display: flex; flex-direction: column; background: #f1f1f1; }
.vb { height: 14px; flex: none; background: #fff; border: 1px solid #ddd; display: flex; align-items: center; justify-content: center; }
.v-track { flex: 1; padding-top: 224px; }
.v-thumb { height: 12px; background: #fff; border: 1px solid #bbb; }

.sheet-tabs { height: 17px; flex: none; display: flex; align-items: center; background: #f5f5f5; border-top: 1px solid #d0d0d0; font-size: 9.500px; color: #555; }
.st-nav { width: 14px; text-align: center; color: #aaa; }
.st-nav:first-child { margin-left: 5px; }
.st { width: 24px; text-align: center; height: 16px; line-height: 15px; border-right: 1px solid #ccc; }
.st.active { width: 43px; margin-left: 23px; background: #fff; color: #217346; font-weight: 700; border-bottom: 1px solid #217346; border-right: 1px solid #ccc; border-left: 1px solid #ccc; }
.st-add { margin-left: 18px; }
.st-dots { margin-left: 333px; width: 12px; color: #888; text-align: center; }
.h-scroll { margin-left: 3px; flex: 1; height: 15px; display: flex; padding-right: 12px; }
.hb { width: 12px; height: 15px; flex: none; background: #fff; border: 1px solid #ddd; display: flex; align-items: center; justify-content: center; }
.h-track { flex: 1; background: #efefef; }
.h-thumb { width: 284px; height: 15px; background: #fff; border: 1px solid #ccc; }

.status { height: 16px; flex: none; display: flex; align-items: center; background: #217346; color: #fff; font-size: 7.500px; padding-left: 2px; }
.status-right { margin-left: auto; display: flex; align-items: center; }
.st-v2 { margin-left: 11px; }
.zoom-minus, .zoom-plus { font-size: 12px; line-height: 10px; width: 9px; text-align: center; }
.zoom-minus { margin-left: 11px; }
.zoom-slider { width: 74px; height: 1px; background: #fff; position: relative; margin: 0 1px; }
.zoom-slider i { position: absolute; left: 38px; top: -4px; width: 3px; height: 9px; background: #fff; }
.zoom-val { margin: 0 1px 0 8px; font-size: 8px; color: #cfe3d6; }

.w10 { height: 28px; flex: 1; display: flex; background: #000; align-items: stretch; border-right: 1px solid #333; }
.w10i { width: 37px; flex: none; display: flex; align-items: center; justify-content: center; padding-top: 2px; }
.w10i.first { margin-right: -6px; }
.w10i.active { background: #2c2c2c; }
.edge { color: #0a7ce0; font: 700 26px/20px "Liberation Sans", sans-serif; }
.w10-tray { margin-left: auto; display: flex; align-items: center; gap: 6px; padding-right: 15px; color: #ccc; }
.w10-clock { width: 54px; margin-left: -5px; text-align: center; font-size: 9px; line-height: 13px; }
.w10-note { margin-left: 0; }

.present-bar { position: absolute; left: 138px; top: -2px; width: 664px; height: 27px; display: flex; align-items: center; background: #2d3d4c; color: #e8e8e8; font-size: 10.200px; border-bottom-right-radius: 4px; filter: blur(.25px); }
.pb-dots { margin-left: 3px; width: 8px; text-align: center; }
.pb-text { margin-left: 4px; }
.give { margin-left: 9px; width: 76px; height: 19px; display: flex; align-items: center; justify-content: space-between; padding: 0 6px 0 5px; background: #1f2c37; border: 1px solid #121a22; font-size: 8.500px; }
.caret-w { border: 3px solid transparent; border-bottom: 0; border-top: 3px solid #fff; }
.pb-rec { margin-left: auto; width: 6px; height: 6px; border-radius: 50%; background: #e01020; }
.stop { margin-left: 11px; width: 85px; height: 22px; display: flex; align-items: center; gap: 3px; padding-left: 6px; background: #1f2c37; border: 1px solid #121a22; font-size: 8.500px; white-space: nowrap; }
.pin { margin: 0 6px 0 5px; }

/* controls */
.controls { margin-top: auto; padding: 0 17px 19px 19px; display: flex; flex: none; }
.ctrl-center { margin-left: 308px; display: flex; gap: 20px; }
.ctrl-center .red { margin-left: 1px; }
.ctrl-right { margin-left: auto; display: flex; gap: 21px; }

/* tiles */
.tile { position: absolute; background: #03476f; color: #e6eef4; display: flex; flex-direction: column; align-items: center; }
.tile-person { fill: #0568a5; }
.tile-main { left: 614px; top: 673px; width: 177px; height: 177px; padding-top: 48px; }
.tile-main .tile-name { position: absolute; left: 9px; bottom: 7px; font-size: 14px; }
.tile-small { left: 805px; top: 761px; width: 89px; height: 89px; padding-top: 25px; }
.tile-small .tile-name { position: absolute; left: 5px; bottom: 4px; font-size: 10.500px; }

/* taskbar */
.taskbar { height: 40px; flex: none; display: flex; align-items: center; background: linear-gradient(90deg, #1f6aa0 0, #2f86bd 30%, #2c7fb8 70%, #1d5f92 100%); border-top: 1px solid #5b8eb0; padding-left: 9px; position: relative; overflow: hidden; }
.taskbar::before { content: ""; position: absolute; left: 1000px; top: 0; width: 30px; height: 40px; background: linear-gradient(90deg, transparent, rgba(255,255,255,.35), transparent); transform: skewX(40deg); }
.orb { width: 36px; height: 36px; flex: none; }
.tb { flex: none; height: 37px; display: flex; align-items: center; justify-content: center; position: relative; }
.tb.btn { background: linear-gradient(#7fb7d9, #4b93c4 60%, #3d87ba); border: 1px solid #a8cde2; border-radius: 3px; box-shadow: inset 0 0 0 1px rgba(255,255,255,.15); }
.ie { width: 41px; margin-left: 23px; }
.expl { width: 58px; margin-left: 12px; background: linear-gradient(#a6d0e8, #6cabd2) !important; }
.mp { width: 44px; margin-left: 9px; }
.ecl { width: 40px; margin-left: 24px; }
.spr { width: 40px; margin-left: 23px; }
.glb { width: 32px; margin-left: 25px; }
.b-chrome { width: 58px; margin-left: 17px; }
.b-ctrl { width: 54px; margin-left: 4px; }
.b-acro { width: 58px; margin-left: 8px; }
.b-sql { width: 58px; margin-left: 4px; }
.b-ppt { width: 59px; margin-left: 4px; }
.b-7z { width: 59px; margin-left: 3px; }
.b-note { width: 58px; margin-left: 3px; }
.b-skype { width: 53px; margin-left: 4px; background: linear-gradient(#c2dff0, #8fc1de) !important; }
.b-paint { width: 58px; margin-left: 9px; }
.sqltext { font: 8px "Liberation Mono", monospace; fill: #fff; }
.lbc { font: 700 8px "Liberation Sans", sans-serif; fill: #fff; }
.sevenz { width: 30px; height: 32px; background: #000; border: 3px solid #fff; color: #fff; font: 700 19px/25px "Liberation Sans", sans-serif; text-align: center; letter-spacing: -1px; }
.tray { margin-left: 68px; flex: 1; height: 39px; display: flex; align-items: center; color: #fff; gap: 10px; position: relative; }
.clock { width: 54px; margin-left: 7px; text-align: center; font-size: 12px; line-height: 17px; white-space: nowrap; letter-spacing: -.2px; }
.show-desk { margin-left: auto; width: 15px; height: 38px; background: rgba(255,255,255,.2); border-left: 1px solid rgba(255,255,255,.4); }
```
